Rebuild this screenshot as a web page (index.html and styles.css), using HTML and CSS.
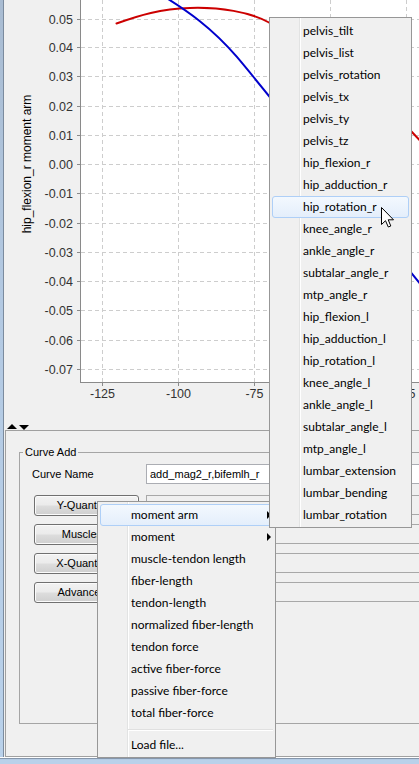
FILE: index.html
```html
<!DOCTYPE html>
<html>
<head>
<meta charset="utf-8">
<link rel="stylesheet" href="styles.css">
</head>
<body>
<div class="window">
  <div class="frame-side"></div>
  <div class="main">
    <svg class="chart" width="415" height="422" viewBox="4 0 415 422">
      <rect class="plot-bg" x="81" y="-1" width="340" height="383"/>
      <g class="grid">
        <line x1="102.5" y1="0" x2="102.5" y2="382"/>
        <line x1="178.5" y1="0" x2="178.5" y2="382"/>
        <line x1="254.5" y1="0" x2="254.5" y2="382"/>
        <line x1="330.5" y1="0" x2="330.5" y2="382"/>
        <line x1="406.5" y1="0" x2="406.5" y2="382"/>
        <line x1="81" y1="19.5" x2="419" y2="19.5"/>
        <line x1="81" y1="47.5" x2="419" y2="47.5"/>
        <line x1="81" y1="76.5" x2="419" y2="76.5"/>
        <line x1="81" y1="106.5" x2="419" y2="106.5"/>
        <line x1="81" y1="135.5" x2="419" y2="135.5"/>
        <line x1="81" y1="164.5" x2="419" y2="164.5"/>
        <line x1="81" y1="193.5" x2="419" y2="193.5"/>
        <line x1="81" y1="223.5" x2="419" y2="223.5"/>
        <line x1="81" y1="252.5" x2="419" y2="252.5"/>
        <line x1="81" y1="281.5" x2="419" y2="281.5"/>
        <line x1="81" y1="310.5" x2="419" y2="310.5"/>
        <line x1="81" y1="340.5" x2="419" y2="340.5"/>
        <line x1="81" y1="369.5" x2="419" y2="369.5"/>
      </g>
      <path class="curve curve-red" d="M116.5,23.5 C140,15 160,9 190,8 S250,12 268,22 C300,40 385,100 422,143"/>
      <path class="curve curve-blue" d="M160,-6 C188,11 212,28 236.7,56.7 C266.7,91.7 380,235 422,286"/>
      <g class="axis">
        <line x1="80.5" y1="0" x2="80.5" y2="383"/>
        <line x1="80" y1="382.5" x2="419" y2="382.5"/>
        <line x1="77" y1="19.5" x2="80" y2="19.5"/>
        <line x1="77" y1="47.5" x2="80" y2="47.5"/>
        <line x1="77" y1="76.5" x2="80" y2="76.5"/>
        <line x1="77" y1="106.5" x2="80" y2="106.5"/>
        <line x1="77" y1="135.5" x2="80" y2="135.5"/>
        <line x1="77" y1="164.5" x2="80" y2="164.5"/>
        <line x1="77" y1="193.5" x2="80" y2="193.5"/>
        <line x1="77" y1="223.5" x2="80" y2="223.5"/>
        <line x1="77" y1="252.5" x2="80" y2="252.5"/>
        <line x1="77" y1="281.5" x2="80" y2="281.5"/>
        <line x1="77" y1="310.5" x2="80" y2="310.5"/>
        <line x1="77" y1="340.5" x2="80" y2="340.5"/>
        <line x1="77" y1="369.5" x2="80" y2="369.5"/>
        <line x1="102.5" y1="383" x2="102.5" y2="386"/>
        <line x1="178.5" y1="383" x2="178.5" y2="386"/>
        <line x1="254.5" y1="383" x2="254.5" y2="386"/>
        <line x1="330.5" y1="383" x2="330.5" y2="386"/>
        <line x1="406.5" y1="383" x2="406.5" y2="386"/>
      </g>
      <g class="ytick">
        <text x="73" y="24">0.05</text>
        <text x="73" y="52">0.04</text>
        <text x="73" y="81">0.03</text>
        <text x="73" y="111">0.02</text>
        <text x="73" y="140">0.01</text>
        <text x="73" y="169">0.00</text>
        <text x="73" y="198">-0.01</text>
        <text x="73" y="228">-0.02</text>
        <text x="73" y="257">-0.03</text>
        <text x="73" y="286">-0.04</text>
        <text x="73" y="315">-0.05</text>
        <text x="73" y="345">-0.06</text>
        <text x="73" y="374">-0.07</text>
      </g>
      <g class="xtick">
        <text x="102.5" y="398">-125</text>
        <text x="178.5" y="398">-100</text>
        <text x="254.5" y="398">-75</text>
        <text x="406.5" y="398">-25</text>
      </g>
      <text class="axis-title" transform="translate(30.5 164) rotate(-90)">hip_flexion_r moment arm</text>
    </svg>
    <div class="splitter">
      <svg width="24" height="6" viewBox="0 0 24 6">
        <polygon points="0,5 5,0 10,5" fill="#000"/>
        <polygon points="12,1 22,1 17,6" fill="#000"/>
      </svg>
    </div>
    <div class="panel">
      <fieldset class="group">
        <legend>Curve Add</legend>
        <div class="name-row">
          <span class="label">Curve Name</span>
          <div class="textfield">add_mag2_r,bifemlh_r</div>
        </div>
        <div class="btn-row first">
          <div class="button">Y-Quantity...</div>
          <div class="field"></div>
        </div>
        <div class="btn-row">
          <div class="button">Muscles...</div>
          <div class="field"></div>
        </div>
        <div class="btn-row">
          <div class="button">X-Quantity...</div>
          <div class="field"></div>
        </div>
        <div class="btn-row">
          <div class="button">Advanced...</div>
          <div class="field"></div>
        </div>
      </fieldset>
    </div>
  </div>
</div>
<div class="frame-bottom"></div>

<div class="menu menu-quantity">
  <div class="menu-item active"><span>moment arm</span><i class="sub-arrow"></i></div>
  <div class="menu-item"><span>moment</span><i class="sub-arrow"></i></div>
  <div class="menu-item"><span>muscle-tendon length</span></div>
  <div class="menu-item"><span>fiber-length</span></div>
  <div class="menu-item"><span>tendon-length</span></div>
  <div class="menu-item"><span>normalized fiber-length</span></div>
  <div class="menu-item"><span>tendon force</span></div>
  <div class="menu-item"><span>active fiber-force</span></div>
  <div class="menu-item"><span>passive fiber-force</span></div>
  <div class="menu-item"><span>total fiber-force</span></div>
  <div class="menu-sep"></div>
  <div class="menu-item"><span>Load file...</span></div>
</div>

<div class="menu menu-coords">
  <div class="menu-item"><span>pelvis_tilt</span></div>
  <div class="menu-item"><span>pelvis_list</span></div>
  <div class="menu-item"><span>pelvis_rotation</span></div>
  <div class="menu-item"><span>pelvis_tx</span></div>
  <div class="menu-item"><span>pelvis_ty</span></div>
  <div class="menu-item"><span>pelvis_tz</span></div>
  <div class="menu-item"><span>hip_flexion_r</span></div>
  <div class="menu-item"><span>hip_adduction_r</span></div>
  <div class="menu-item active"><span>hip_rotation_r</span></div>
  <div class="menu-item"><span>knee_angle_r</span></div>
  <div class="menu-item"><span>ankle_angle_r</span></div>
  <div class="menu-item"><span>subtalar_angle_r</span></div>
  <div class="menu-item"><span>mtp_angle_r</span></div>
  <div class="menu-item"><span>hip_flexion_l</span></div>
  <div class="menu-item"><span>hip_adduction_l</span></div>
  <div class="menu-item"><span>hip_rotation_l</span></div>
  <div class="menu-item"><span>knee_angle_l</span></div>
  <div class="menu-item"><span>ankle_angle_l</span></div>
  <div class="menu-item"><span>subtalar_angle_l</span></div>
  <div class="menu-item"><span>mtp_angle_l</span></div>
  <div class="menu-item"><span>lumbar_extension</span></div>
  <div class="menu-item"><span>lumbar_bending</span></div>
  <div class="menu-item"><span>lumbar_rotation</span></div>
</div>

<svg class="cursor" width="14" height="22" viewBox="0 0 14 22">
  <path d="M0.5,0.5 L0.5,17.5 L4.5,13.7 L7.3,20 L9.8,19 L7.2,12.8 L12.5,12.8 Z" fill="#fff" stroke="#000" stroke-width="1" stroke-linejoin="miter"/>
</svg>
</body>
</html>
```
FILE: styles.css
```css
* { box-sizing: border-box; }

html, body {
  margin: 0;
  padding: 0;
}

body {
  width: 419px;
  height: 764px;
  overflow: hidden;
  position: relative;
  background: #f0f0f0;
  font-family: "Liberation Sans", Arial, sans-serif;
  font-size: 11px;
  color: #000;
}

.window {
  display: flex;
  height: 757px;
}

.frame-side {
  flex: none;
  width: 4px;
  background: linear-gradient(#a9bcd2, #b3c9e2 40%, #b9d1ea);
  border-right: 1px solid #7b8b9e;
}

.main {
  flex: 1;
  min-width: 0;
  display: flex;
  flex-direction: column;
}

.chart {
  display: block;
  flex: none;
}

.plot-bg { fill: #fff; }

.grid line {
  stroke: #cdcdcd;
  stroke-width: 1;
  stroke-dasharray: 4 3;
}

.curve {
  fill: none;
  stroke-width: 2;
  stroke-linejoin: round;
  stroke-linecap: round;
}

.curve-red { stroke: #cc0000; }
.curve-blue { stroke: #0000cc; }

.axis line {
  stroke: #8a8a8a;
  stroke-width: 1;
}

.ytick text,
.xtick text {
  font-family: "Liberation Sans", Arial, sans-serif;
  font-size: 12.5px;
  fill: #333;
}

.ytick text { text-anchor: end; }
.xtick text { text-anchor: middle; }

.axis-title {
  font-family: "Liberation Sans", Arial, sans-serif;
  font-size: 12px;
  fill: #000;
  text-anchor: middle;
}

.splitter {
  flex: none;
  height: 8px;
  padding: 2px 0 0 3px;
}

.splitter svg { display: block; }

.panel {
  flex: 1;
  margin-left: 1px;
  border-top: 1px solid #a0a0a0;
  border-left: 1px solid #a0a0a0;
  border-bottom: 1px solid #a0a0a0;
  padding: 14px 0 0 13px;
}

.group {
  margin: 0;
  width: 420px;
  height: 279px;
  min-width: 0;
  border: 1px solid #a5a5a5;
  padding: 5px 0 0 0;
}

.group legend {
  margin-left: 3px;
  padding: 0 2px;
  font-size: 11px;
  line-height: 14px;
}

.name-row {
  display: flex;
  align-items: center;
  height: 20px;
  padding-left: 12px;
}

.name-row .label {
  flex: none;
  width: 114px;
}

.textfield {
  flex: none;
  width: 300px;
  height: 20px;
  border: 1px solid #abadb3;
  background: #fff;
  padding-left: 3px;
  line-height: 18px;
  white-space: nowrap;
}

.btn-row {
  display: flex;
  gap: 7px;
  height: 21px;
  margin-top: 8px;
  padding-left: 14px;
}

.btn-row.first { margin-top: 11px; }

.button {
  flex: none;
  width: 105px;
  height: 21px;
  border: 1px solid #707070;
  border-radius: 3px;
  background: linear-gradient(#f2f2f2 0%, #ebebeb 48%, #dddddd 52%, #cfcfcf 100%);
  box-shadow: inset 0 0 0 1px #fbfbfb;
  text-align: center;
  line-height: 19px;
  white-space: nowrap;
}

.field {
  flex: none;
  width: 300px;
  height: 20px;
  border: 1px solid #a8a8a8;
  background: #f0f0f0;
}

.frame-bottom {
  height: 7px;
  background: linear-gradient(#ffffff 0 1px, #8596ab 1px 2px, #b4cbe4 2px 3px, #b9d1ea 3px);
}

.menu {
  position: absolute;
  border: 1px solid #979797;
  padding: 2px 0 1px;
  background-color: #f0f0f0;
  background-image: linear-gradient(to right, transparent 29px, #e2e3e3 29px, #e2e3e3 30px, #ffffff 30px, #ffffff 31px, transparent 31px);
  font-family: Lato, "Liberation Sans", sans-serif;
  font-size: 12px;
  color: #000;
}

.menu-quantity {
  left: 97px;
  top: 501px;
  width: 179px;
}

.menu-coords {
  left: 269px;
  top: 17px;
  width: 143px;
}

.menu-item {
  display: flex;
  align-items: center;
  justify-content: space-between;
  height: 22px;
  margin: 0 2px;
  padding: 0 1px 0 30px;
  border: 1px solid transparent;
  border-radius: 3px;
  line-height: 20px;
  white-space: nowrap;
}

.menu-item.active {
  border-color: #aecff7;
  background: linear-gradient(#f3f8fe, #e4eefb);
}

.sub-arrow {
  display: block;
  width: 0;
  height: 0;
  border-left: 4px solid #000;
  border-top: 4px solid transparent;
  border-bottom: 4px solid transparent;
}

.menu-sep {
  margin: 5px 2px 3px 30px;
  border-top: 1px solid #e0e0e0;
  border-bottom: 1px solid #ffffff;
}

.cursor {
  position: absolute;
  left: 381px;
  top: 207px;
}
```
